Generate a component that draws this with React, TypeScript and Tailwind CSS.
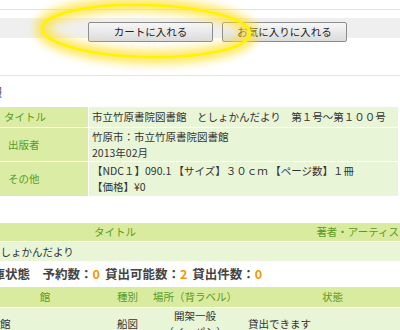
import React from 'react';

function Glow() {
  return (
    <svg className="pointer-events-none absolute left-0 top-0" width="400" height="80" viewBox="0 0 400 80">
      <defs>
        <filter id="soft" x="-20%" y="-60%" width="140%" height="220%">
          <feGaussianBlur stdDeviation="4.5" />
        </filter>
      </defs>
      <g transform="rotate(1.5 146 31)">
        <ellipse cx="146" cy="31" rx="104" ry="26" fill="none" stroke="#ffe02a" strokeWidth="14" opacity="0.7" filter="url(#soft)" />
        <ellipse cx="146" cy="31" rx="104" ry="26" fill="none" stroke="#fff300" strokeWidth="2.5" />
      </g>
    </svg>
  );
}

export default function App() {
  return (
    <div className="relative h-[330px] w-[400px] overflow-hidden bg-white font-['Noto_Sans_CJK_JP','Noto_Sans',sans-serif] text-[10.5px] leading-[16px] text-[#333]">
      {/* cart buttons */}
      <div className="h-[9px]" />
      <div className="h-px bg-[#e4e4e4]" />
      <div className="h-[8px]" />
      <div className="flex h-[20px] gap-[9px] bg-[#efefef] pl-[88px]">
        <button className="mt-[4px] h-[20px] w-[125px] shrink-0 rounded-[2px] border border-[#8c8c8c] bg-gradient-to-b from-[#f7f7f7] to-[#dcdcdc] text-[10.5px] text-[#222]">
          カートに入れる
        </button>
        <button className="mt-[4px] h-[20px] w-[125px] shrink-0 rounded-[2px] border border-[#8c8c8c] bg-gradient-to-b from-[#f7f7f7] to-[#dcdcdc] text-[10.5px] text-[#222]">
          お気に入りに入れる
        </button>
      </div>
      <div className="h-[37px]" />
      <div className="h-px bg-[#e4e4e4]" />

      <div className="flex h-[31px] items-center">
        <span className="-ml-[9px] text-[11px]">報</span>
      </div>

      {/* 書誌情報 */}
      <div className="grid w-[398px] grid-cols-[88px_1fr] gap-px">
        <div className="flex h-[20px] items-center bg-[#dbeda4] pl-[4px] text-[#5c9a1f]">タイトル</div>
        <div className="flex items-center bg-[#e9f5d7] pl-[3px]">市立竹原書院図書館　としょかんだより　第１号～第１００号</div>
        <div className="flex h-[33px] items-center bg-[#dbeda4] pl-[8px] text-[#5c9a1f]">出版者</div>
        <div className="flex flex-col justify-center bg-[#e9f5d7] pl-[3px]">
          <span>竹原市：市立竹原書院図書館</span>
          <span>2013年02月</span>
        </div>
        <div className="flex h-[34px] items-center bg-[#dbeda4] pl-[8px] text-[#5c9a1f]">その他</div>
        <div className="flex flex-col justify-center bg-[#e9f5d7] pl-[3px]">
          <span>【NDC１】090.1 【サイズ】３０ｃｍ 【ページ数】１冊</span>
          <span>【価格】¥0</span>
        </div>
      </div>

      <div className="flex h-[27px] items-center">
        <span className="-ml-[9px] text-[11px]">：</span>
      </div>

      {/* 親書誌 */}
      <div className="-ml-[20px] w-[510px]">
        <div className="grid h-[18px] grid-cols-[270px_1fr] bg-[#d9eb9e] text-[#5c9a1f]">
          <div className="flex items-center justify-center">タイトル</div>
          <div className="flex items-center justify-center pr-[14px]">著者・アーティスト</div>
        </div>
        <div className="grid h-[20px] grid-cols-[270px_1fr] border-t border-white bg-[#e9f5d7]">
          <div className="flex items-center pl-[10px]">としょかんだより</div>
          <div />
        </div>
      </div>

      {/* 所蔵状態 */}
      <div className="flex h-[26px] items-center whitespace-nowrap text-[12.5px] font-bold text-[#444]">
        <span className="-ml-[20px]">在庫状態　予約数：</span>
        <span className="text-[#f39800]">0</span>
        <span className="ml-[5px]">貸出可能数：</span>
        <span className="text-[#f39800]">2</span>
        <span className="ml-[5px]">貸出件数：</span>
        <span className="text-[#f39800]">0</span>
      </div>

      <div className="-ml-[20px] w-[440px]">
        <div className="grid h-[20px] grid-cols-[130px_35px_100px_175px] bg-[#d9eb9e] text-[#5c9a1f]">
          <div className="flex items-center justify-center">館</div>
          <div className="flex items-center justify-center">種別</div>
          <div className="flex items-center justify-center">場所（背ラベル）</div>
          <div className="flex items-center justify-center">状態</div>
        </div>
        <div className="grid h-[33px] grid-cols-[130px_35px_100px_175px] border-t border-white bg-[#e9f5d7]">
          <div className="flex items-center pl-[20px]">館</div>
          <div className="flex items-center justify-center">船図</div>
          <div className="flex flex-col items-center justify-center">
            <span>開架一般</span>
            <span>（イッパン）</span>
          </div>
          <div className="flex items-center pl-[3px]">貸出できます</div>
        </div>
      </div>

      <Glow />
    </div>
  );
}
